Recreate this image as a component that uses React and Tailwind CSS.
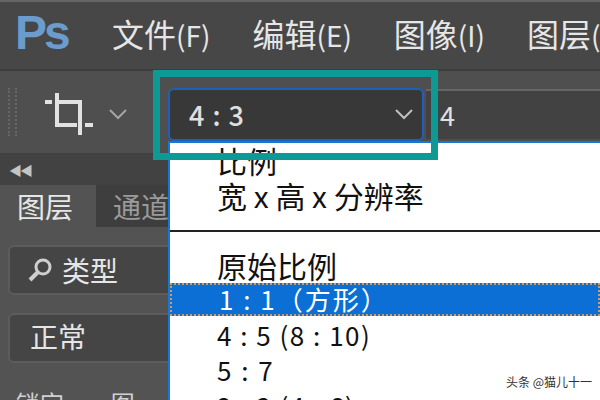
const cjk = { fontFamily: '"Noto Sans CJK SC", "Liberation Sans", sans-serif' };

function CropIcon() {
  return (
    <svg width="48" height="42" viewBox="0 0 48 42" fill="none" stroke="#e2e2e2" strokeWidth="4">
      <path d="M0 9h7" />
      <path d="M12 0v32h20M12 9h23v33" />
      <path d="M40 32h8" />
    </svg>
  );
}

function Chevron({ color }) {
  return (
    <svg width="20" height="12" viewBox="0 0 20 12" fill="none" stroke={color} strokeWidth="2">
      <path d="M2 2l8 8 8-8" />
    </svg>
  );
}

function Search() {
  return (
    <svg width="28" height="28" viewBox="0 0 28 28" fill="none">
      <circle cx="17" cy="11" r="7" stroke="#cfcfcf" strokeWidth="3" />
      <path d="M12 16l-8 8" stroke="#cfcfcf" strokeWidth="4" />
    </svg>
  );
}

function Menu({ name, hot }) {
  return (
    <div className="flex items-baseline text-[#e6e6e6]">
      <span className="text-[32px] leading-none">{name}</span>
      <span className="text-[28px] leading-none">{hot}</span>
    </div>
  );
}

export default function App() {
  return (
    <div className="relative w-[600px] h-[400px] overflow-hidden bg-[#535353] flex flex-col" style={cjk}>
      <div className="h-[71px] shrink-0 bg-[#474747] border-t-2 border-[#666] border-b-2 border-b-[#3c3c3c] flex items-center pb-[6px]">
        <div className="w-[112px] shrink-0 pl-[15px] text-[48px] font-bold tracking-[-3px] text-[#6b9ccb] leading-none" style={{ fontFamily: '"Liberation Sans", sans-serif' }}>Ps</div>
        <div className="flex shrink-0 gap-[42px] whitespace-nowrap">
          <Menu name="文件" hot="(F)" />
          <Menu name="编辑" hot="(E)" />
          <Menu name="图像" hot="(I)" />
          <Menu name="图层" hot="(L)" />
        </div>
      </div>

      <div className="h-[84px] shrink-0 bg-[#4f4f4f] border-b-2 border-[#404040] flex items-center">
        <div className="ml-[8px] w-[9px] h-[48px] border-x-2 border-dotted border-[#666]" />
        <div className="ml-[28px] mt-[4px]"><CropIcon /></div>
        <div className="ml-[15px] mt-[4px]"><Chevron color="#a5a5a5" /></div>
        <div className="ml-[40px] mt-[4px] w-[256px] h-[53px] bg-[#383838] rounded-[6px] border-2 border-[#1f5fbf] flex items-center justify-between pl-[19px] pr-[8px]">
          <span className="text-[27px] tracking-[1px] font-medium text-[#e0e0e0] leading-none">4 : 3</span>
          <Chevron color="#c0c0c0" />
        </div>
        <div className="ml-[2px] mt-[4px] flex-1 h-[50px] bg-[#424242] border-t-2 border-[#666] flex items-center pl-[14px] text-[27px] text-[#e0e0e0]">4</div>
      </div>

      <div className="flex-1 w-[168px] flex flex-col">
        <div className="h-[30px] shrink-0 bg-[#424242] flex items-center pl-[9px] text-[#c4c4c4] text-[13px] tracking-[-2px]">◀◀</div>
        <div className="h-[42px] shrink-0 bg-[#3e3e3e] flex">
          <div className="w-[96px] bg-[#535353] pl-[17px] text-[28px] text-[#e6e6e6] leading-[42px]">图层</div>
          <div className="flex-1 pl-[17px] text-[28px] text-[#9a9a9a] leading-[42px] whitespace-nowrap overflow-hidden">通道</div>
        </div>
        <div className="flex-1 flex flex-col pl-[8px] pt-[18px]">
          <div className="h-[50px] shrink-0 bg-[#454545] border-2 border-[#5c5c5c] rounded-l-[6px] border-r-0 flex items-center pl-[16px] gap-[8px] text-[28px] text-[#e6e6e6]">
            <Search />
            <span className="leading-none">类型</span>
          </div>
          <div className="mt-[18px] h-[50px] shrink-0 bg-[#454545] border-2 border-[#5c5c5c] rounded-l-[6px] border-r-0 flex items-center pl-[20px] pb-[4px] text-[28px] text-[#e6e6e6]">正常</div>
          <div className="mt-[28px] pl-[8px] flex gap-[40px] text-[24px] text-[#d0d0d0] leading-none">
            <span>锁定:</span>
            <span>图</span>
          </div>
        </div>
      </div>

      {/* dropdown list over the options bar */}
      <div className="absolute left-[168px] top-[141px] w-[432px] h-[259px] bg-white border-l-2 border-t-2 border-[#1478d4] text-[#111] overflow-hidden">
        <div className="h-[34px] pl-[47px] text-[30px] leading-[34px]">比例</div>
        <div className="h-[36px] pl-[47px] text-[30px] leading-[36px] whitespace-nowrap">宽 x 高 x 分辨率</div>
        <div className="h-[17px]" />
        <div className="h-[2px] bg-[#222]" />
        <div className="h-[16px]" />
        <div className="h-[34px] pl-[47px] text-[30px] leading-[34px]">原始比例</div>
        <div className="h-[1px]" />
        <div className="h-[33px] pl-[47px] bg-[#0b6fd6] text-white border-y-2 border-x-2 border-dotted border-[#d89a5a] text-[26px] leading-[28px] tracking-[2px] whitespace-nowrap">1 : 1（方形）</div>
        <div className="h-[36px] pl-[47px] text-[26px] leading-[37px] tracking-[1.5px] whitespace-nowrap">4 : 5 (8 : 10)</div>
        <div className="h-[36px] pl-[47px] text-[26px] leading-[35px] tracking-[2px]">5 : 7</div>
        <div className="h-[36px] pl-[47px] text-[26px] leading-[36px] tracking-[1.5px] whitespace-nowrap">2 : 3 (4 : 6)</div>
      </div>

      {/* teal annotation frame */}
      <div className="absolute left-[153px] top-[70px] w-[285px] h-[90px] border-[7px] border-[#0d9a94]" />

      <div className="absolute left-[506px] top-[373px] text-[12px] text-[#333] whitespace-nowrap">头条 @猫儿十一</div>
    </div>
  );
}
